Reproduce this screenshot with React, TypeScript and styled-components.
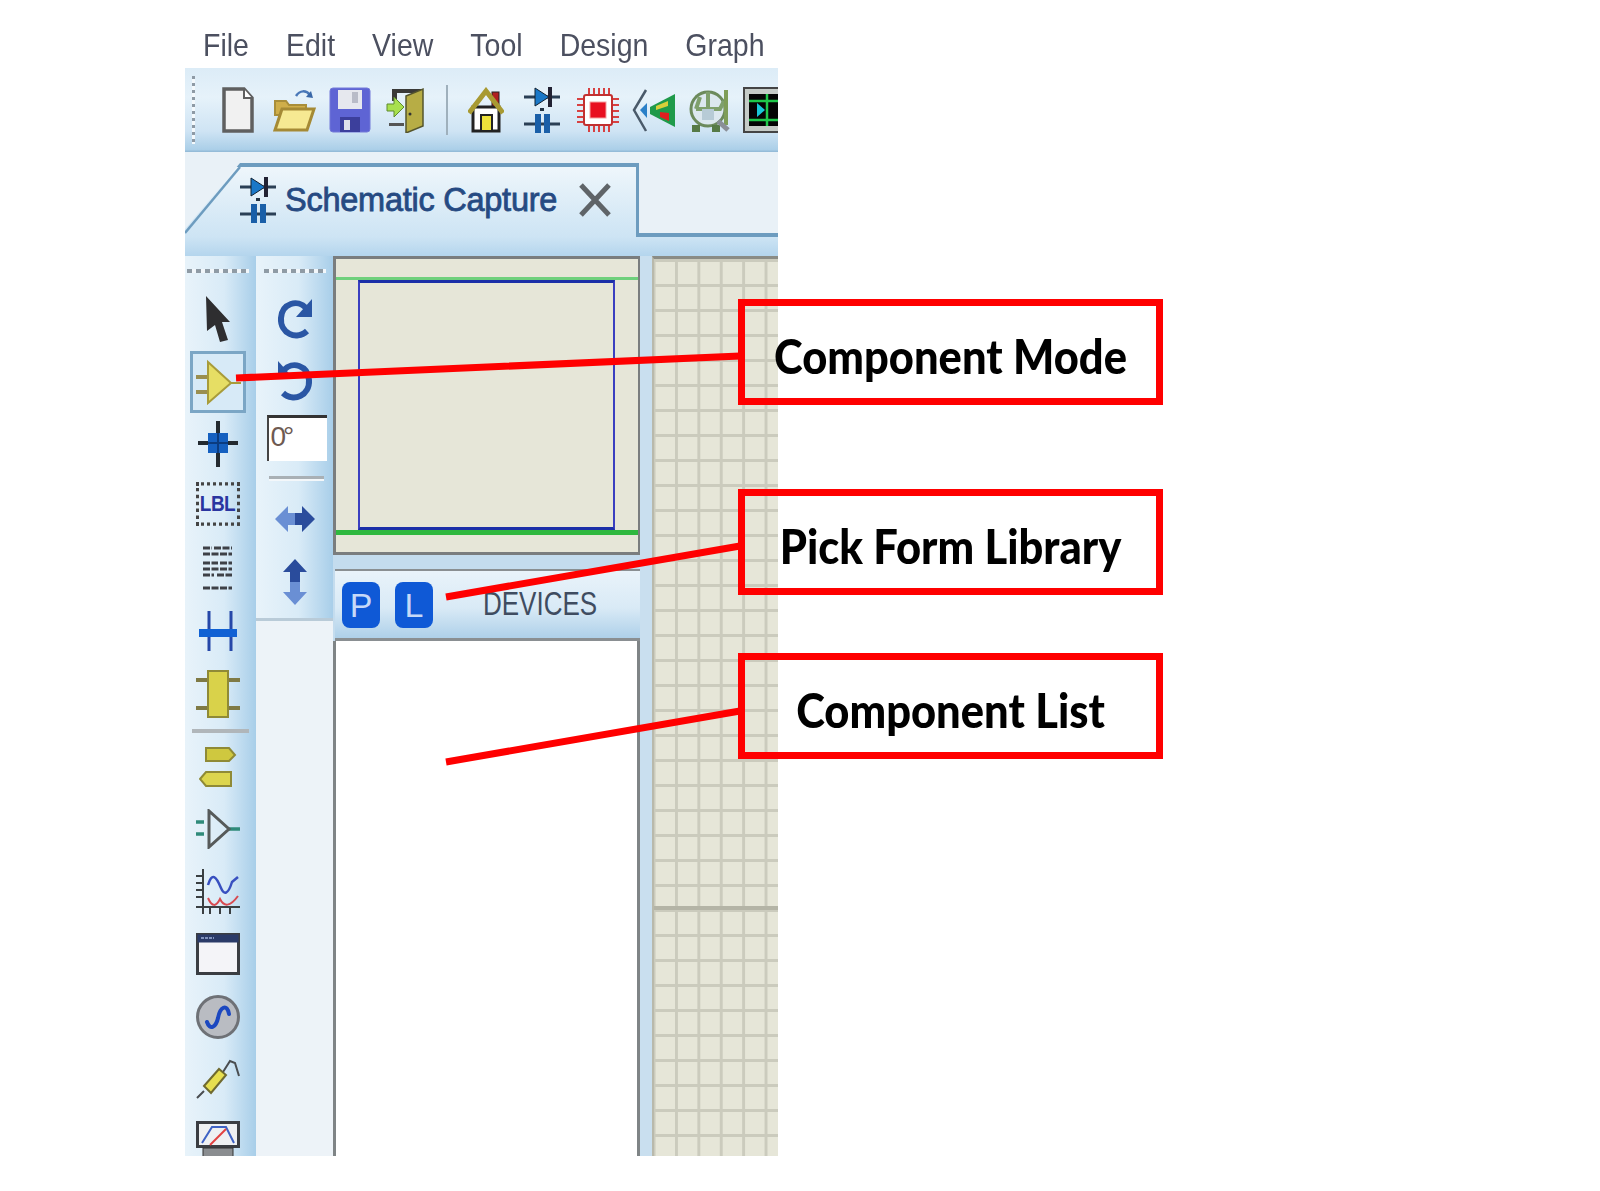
import React from "react";
import styled, { createGlobalStyle } from "styled-components";

const GlobalStyle = createGlobalStyle`
  html, body { margin: 0; padding: 0; background: #fff; overflow: hidden; }
  body { font-family: "Liberation Sans", Arial, sans-serif; }
`;

const Stage = styled.div`
  position: relative;
  width: 1600px;
  height: 1191px;
  padding-left: 185px;
  box-sizing: border-box;
`;

const Window = styled.div`
  width: 593px;
  height: 1156px;
  display: flex;
  flex-direction: column;
  overflow: hidden;
  filter: blur(0.7px);
`;

const MenuBar = styled.div`
  height: 68px;
  flex-shrink: 0;
  display: flex;
  align-items: center;
  gap: 37px;
  padding: 0 0 0 18px;
  background: #fff;
  box-sizing: border-box;
`;

const MenuItem = styled.span`
  font-size: 28.5px;
  line-height: 34px;
  margin-top: 22px;
  color: #4c5060;
  transform: scaleY(1.12);
`;

const Toolbar = styled.div`
  position: relative;
  height: 84px;
  flex-shrink: 0;
  display: flex;
  align-items: center;
  gap: 10px;
  padding-left: 30px;
  overflow: hidden;
  box-sizing: border-box;
  background: linear-gradient(#dcecf7 0%, #e6f2fa 35%, #cfe4f4 75%, #abcfe8 97%, #8fb7d4 100%);
`;

const ToolbarGrip = styled.div`
  position: absolute;
  left: 7px;
  top: 8px;
  width: 3px;
  height: 68px;
  background: repeating-linear-gradient(#8e9aa5 0 3px, #f4f9fc 3px 7px);
`;

const ToolbarIcon = styled.div`
  width: 46px;
  height: 48px;
  flex-shrink: 0;
  display: flex;
  align-items: center;
  justify-content: center;
`;

const ToolbarSep = styled.div`
  width: 2px;
  height: 50px;
  flex-shrink: 0;
  margin: 0 5px 0 7px;
  background: #9fb0bc;
`;

const TabBar = styled.div`
  flex-shrink: 0;
  background: #e9f1f7;
`;

const TabRow = styled.div`
  height: 85px;
  padding-top: 11px;
  box-sizing: border-box;
  display: flex;
`;

const Tab = styled.div`
  position: relative;
  width: 454px;
  flex-shrink: 0;
  box-sizing: border-box;
  padding: 0 0 4px 55px;
  display: flex;
  align-items: center;
  border-top: 4px solid #6d9cbf;
  border-right: 3px solid #6d9cbf;
  background: linear-gradient(#eef6fb, #cde4f4);
  clip-path: polygon(55px 0, 100% 0, 100% 100%, 0 100%, 0 66px);
`;

const TabSlant = styled.svg`
  position: absolute;
  left: 0;
  top: -4px;
`;

const TabTitle = styled.span`
  margin-left: 9px;
  font-size: 32.5px;
  letter-spacing: -0.25px;
  color: #264a82;
  -webkit-text-stroke: 0.8px #264a82;
  white-space: nowrap;
`;

const TabClose = styled.svg`
  margin-left: 21px;
  flex-shrink: 0;
`;

const TabRest = styled.div`
  flex: 1;
  border-bottom: 4px solid #6d9cbf;
`;

const TabFoot = styled.div`
  height: 19px;
  background: linear-gradient(#cde4f4, #b4d5ed);
`;

const Main = styled.div`
  flex: 1;
  min-height: 0;
  display: flex;
  background: #c4dcee;
`;

const sideGradient = "linear-gradient(90deg, #e8f3fa 0%, #d9ebf7 55%, #a8cee9 100%)";

const ModeColumn = styled.div`
  width: 71px;
  flex-shrink: 0;
  box-sizing: border-box;
  padding-right: 6px;
  display: flex;
  flex-direction: column;
  align-items: center;
  overflow: hidden;
  background: ${sideGradient};
`;

const OrientColumn = styled.div`
  width: 77px;
  flex-shrink: 0;
  background: #edf3f8;
`;

const OrientTools = styled.div`
  height: 365px;
  display: flex;
  flex-direction: column;
  align-items: center;
  background: ${sideGradient};
  border-bottom: 3px solid #b9cbd8;
  box-sizing: border-box;
`;

const Grip = styled.div`
  width: 62px;
  height: 4px;
  flex-shrink: 0;
  margin: 13px 0 15px;
  background: repeating-linear-gradient(90deg, #8f9ba5 0 5px, #f2f7fb 5px 9px);
`;

const ModeButton = styled.div<{ $active?: boolean }>`
  width: 56px;
  height: 62.5px;
  flex-shrink: 0;
  box-sizing: border-box;
  display: flex;
  align-items: center;
  justify-content: center;
  border: 3px solid ${(p) => (p.$active ? "#7ba6c5" : "transparent")};
  background: ${(p) => (p.$active ? "#d7eaf7" : "transparent")};
`;

const ModeSep = styled.div`
  width: 57px;
  height: 4px;
  flex-shrink: 0;
  margin: 3px 0 3px 6px;
  background: #b0b6ba;
`;

const LabelChip = styled.div`
  width: 44px;
  height: 38px;
  margin-top: -6px;
  box-sizing: border-box;
  border: 3px dotted #444;
  display: flex;
  align-items: center;
  justify-content: center;
  font-size: 19px;
  font-weight: 700;
  letter-spacing: -0.5px;
  color: #2a35a0;
  transform: scaleY(1.15);
`;

const OrientButton = styled.div<{ $height: number }>`
  width: 100%;
  height: ${(p) => p.$height}px;
  flex-shrink: 0;
  display: flex;
  align-items: center;
  justify-content: center;
`;

const AngleBox = styled.div`
  width: 60px;
  height: 46px;
  margin: 3px 0 0 4px;
  flex-shrink: 0;
  box-sizing: border-box;
  padding: 2px 0 0 2px;
  background: #fff;
  border-top: 3px solid #333;
  border-left: 2px solid #444;
  font-size: 28px;
  line-height: 34px;
  letter-spacing: -3px;
  color: #6e5a52;
`;

const OrientSep = styled.div`
  width: 55px;
  height: 3px;
  margin: 15px 0 9px 4px;
  flex-shrink: 0;
  background: #a9b0b5;
  box-shadow: 0 2px 0 #f3f7fa;
`;

const Middle = styled.div`
  width: 307px;
  flex-shrink: 0;
  display: flex;
  flex-direction: column;
`;

const Preview = styled.div`
  height: 299px;
  flex-shrink: 0;
  box-sizing: border-box;
  padding-top: 18px;
  background: #e6e6d8;
  border: 3px solid #7a7d7e;
  border-right-width: 2px;
`;

const PreviewSheet = styled.div`
  height: 258px;
  box-sizing: border-box;
  display: flex;
  padding: 0 23px 0 22px;
  border-top: 3px solid #6fd07c;
  border-bottom: 5px solid #2fb83f;
`;

const PreviewRect = styled.div`
  flex: 1;
  border: 2px solid #3a3fc0;
  border-top: 3px solid #1b2fa8;
  border-bottom: 3px solid #1b2fa8;
`;

const DevicesHeader = styled.div`
  height: 72px;
  flex-shrink: 0;
  margin: 14px 0 0 2px;
  box-sizing: border-box;
  display: flex;
  align-items: center;
  padding-left: 7px;
  gap: 15px;
  border-top: 2px solid #8a8f92;
  border-bottom: 3px solid #8a8f92;
  background: linear-gradient(#e9f3fa, #d9eaf6 55%, #aed0e9);
`;

const PickButton = styled.div`
  width: 38px;
  height: 46px;
  box-sizing: border-box;
  display: flex;
  align-items: center;
  justify-content: center;
  border-radius: 8px;
  background: #0f59d6;
  color: #c6d9f8;
  font-size: 34px;
  line-height: 1;
`;

const DevicesLabel = styled.span`
  margin-left: 35px;
  font-size: 26px;
  color: #3f4c60;
  transform: scaleY(1.25);
`;

const DeviceList = styled.div`
  flex: 1;
  background: #fff;
  margin-left: 0;
  border-left: 3px solid #7f8486;
  border-right: 3px solid #7f8486;
`;

const Gutter = styled.div`
  width: 12px;
  flex-shrink: 0;
  background: #c9dfef;
`;

const Canvas = styled.div`
  flex: 1;
  min-width: 0;
  border-top: 3px solid #8a8c86;
  border-left: 2px solid #b9b9ab;
  background-color: #e6e6d8;
  background-image: linear-gradient(#b4b4a6, #b4b4a6), linear-gradient(#cbcbbd 0 3px, transparent 3px),
    linear-gradient(90deg, #cbcbbd 0 3px, transparent 3px);
  background-size: 100% 4px, 100% 25px, 22.4px 100%;
  background-position: 0 647px, 0 0, 21px 0;
  background-repeat: no-repeat, repeat, repeat;
`;

const Leaders = styled.svg`
  position: absolute;
  left: 0;
  top: 0;
  pointer-events: none;
`;

const Callout = styled.div<{ $top: number }>`
  position: absolute;
  left: 738px;
  top: ${(p) => p.$top}px;
  width: 425px;
  height: 106px;
  box-sizing: border-box;
  border: 7px solid #f00;
  padding-top: 6px;
  display: flex;
  align-items: center;
  justify-content: center;
  font-family: Lato, "Open Sans", sans-serif;
  font-weight: 900;
  font-size: 43.5px;
  color: #000;
  white-space: nowrap;
`;

const CalloutText = styled.span`
  display: block;
  transform: scaleY(1.1);
`;

const Ico = ({ w, h, children }: { w: number; h: number; children: React.ReactNode }) => (
  <svg width={w} height={h} viewBox={`0 0 ${w} ${h}`}>
    {children}
  </svg>
);

const NewIcon = () => (
  <Ico w={34} h={46}>
    <path d="M3 2H23L31 11V44H3Z" fill="#f1f1f1" stroke="#5f5f5f" strokeWidth="3.5" />
    <path d="M23 2V11H31" fill="#fff" stroke="#5f5f5f" strokeWidth="2" />
  </Ico>
);

const OpenIcon = () => (
  <Ico w={44} h={46}>
    <path d="M3 14H14L17 18H34V28H3Z" fill="#cfae4a" stroke="#a98e3a" strokeWidth="2" />
    <path d="M3 43L10 22H42L35 43Z" fill="#f6e992" stroke="#a58a35" strokeWidth="3" />
    <path d="M24 9C28 3 34 3 38 8" fill="none" stroke="#4a78b8" strokeWidth="2.5" />
    <path d="M34 10L41 11L39 4Z" fill="#3a68a8" />
  </Ico>
);

const SaveIcon = () => (
  <Ico w={42} h={46}>
    <rect x="1" y="1" width="40" height="44" rx="3" fill="#5e64d4" stroke="#7379d8" />
    <rect x="9" y="3" width="24" height="19" fill="#e6e8ee" />
    <rect x="23" y="5" width="6" height="11" fill="#b9bcc8" />
    <rect x="11" y="30" width="20" height="15" fill="#3c3f9c" />
    <rect x="15" y="33" width="6" height="10" fill="#dfe0ea" />
  </Ico>
);

const ExitIcon = () => (
  <Ico w={42} h={46}>
    <path d="M7 2H38V38H34V6H12V14H7Z" fill="#3a3a38" />
    <path d="M21 9L38 2V39L21 46Z" fill="#b7ad45" stroke="#55552c" strokeWidth="1.5" />
    <path d="M2 17H9V10L19 20L9 30V24H2Z" fill="#a8e04e" stroke="#5f8a2e" />
    <rect x="4" y="36" width="15" height="3" fill="#555" />
    <circle cx="25" cy="27" r="1.5" fill="#333" />
  </Ico>
);

const HomeIcon = () => (
  <Ico w={36} h={46}>
    <rect x="24" y="5" width="7" height="18" fill="#b02020" stroke="#222" />
    <rect x="5" y="20" width="26" height="24" fill="#fff" stroke="#222" strokeWidth="3" />
    <path d="M1 26L18 4L35 26" fill="none" stroke="#a89a32" strokeWidth="5" />
    <rect x="13" y="28" width="11" height="16" fill="#ede23a" stroke="#222" strokeWidth="2" />
  </Ico>
);

const SchematicIcon = () => (
  <Ico w={36} h={48}>
    <path d="M0 11H36M0 38H36" stroke="#2a3f55" strokeWidth="3" />
    <path d="M11 2L25 11L11 20Z" fill="#1a78c8" stroke="#123" />
    <rect x="24" y="1" width="4" height="20" fill="#223" />
    <rect x="11" y="28" width="6" height="19" fill="#1a5fa8" />
    <rect x="20" y="28" width="6" height="19" fill="#1a5fa8" />
    <rect x="16" y="22" width="4" height="3" fill="#234" />
  </Ico>
);

const ChipIcon = () => (
  <Ico w={44} h={46}>
    <path d="M13 1V45M18 1V45M23 1V45M28 1V45M33 1V45M1 12H43M1 18H43M1 24H43M1 30H43M1 35H43" stroke="#d84040" strokeWidth="2" />
    <rect x="8" y="8" width="28" height="30" rx="2" fill="#fff" stroke="#c23030" strokeWidth="2" />
    <rect x="14" y="15" width="16" height="16" fill="#e80f20" stroke="#f3a0a0" />
  </Ico>
);

const ThreeDIcon = () => (
  <Ico w={44} h={46}>
    <path d="M14 3L2 23L14 44" fill="none" stroke="#4a5a6a" strokeWidth="2.5" />
    <path d="M8 23L15 16V31Z" fill="#2a80c8" />
    <path d="M18 20L43 7V40L18 27Z" fill="#1f9a4a" />
    <path d="M24 19L36 14V19L24 23Z" fill="#d8cf3a" />
    <path d="M28 25L37 26V34L28 30Z" fill="#e02020" />
  </Ico>
);

const GearIcon = () => (
  <Ico w={44} h={46}>
    <circle cx="20" cy="22" r="17" fill="#dce8ef" stroke="#6c8a5c" strokeWidth="3" />
    <path d="M20 5V22M8 22H32L36 14M8 22L12 10" fill="none" stroke="#7fa06c" strokeWidth="4" />
    <rect x="14" y="22" width="12" height="11" fill="#b7cbd6" />
    <path d="M38 3V38" stroke="#7e9d58" strokeWidth="4" />
    <rect x="4" y="38" width="8" height="7" fill="#567a46" />
    <rect x="24" y="38" width="8" height="7" fill="#567a46" />
    <path d="M30 34L40 43" stroke="#8a8f98" strokeWidth="5" />
  </Ico>
);

const GraphIcon = () => (
  <Ico w={46} h={46}>
    <rect x="1" y="1" width="44" height="44" fill="#c5cbc7" stroke="#444" strokeWidth="2" />
    <rect x="6" y="7" width="36" height="32" fill="#050505" />
    <path d="M6 14H42M6 33H42M24 7V39" stroke="#1fc84a" strokeWidth="2.5" />
    <path d="M14 16V30L22 23Z" fill="#18c8d8" />
  </Ico>
);

const CursorIcon = () => (
  <Ico w={32} h={48}>
    <path d="M4 1L28 27H20L26 45L18 47L13 30L5 36Z" fill="#2e2e30" />
  </Ico>
);

const ComponentIcon = () => (
  <Ico w={46} h={46}>
    <path d="M1 18H14M1 33H14" stroke="#9a8f50" strokeWidth="4" />
    <path d="M13 3L36 24L13 44Z" fill="#e6de64" stroke="#a89c3a" strokeWidth="2" />
    <path d="M36 24H46" stroke="#a89c3a" strokeWidth="2" />
  </Ico>
);

const JunctionIcon = () => (
  <Ico w={42} h={46}>
    <path d="M21 0V46M1 22H41" stroke="#232a30" strokeWidth="4" />
    <rect x="11" y="12" width="20" height="20" fill="#1560c0" />
    <path d="M21 12V32M11 22H31" stroke="#0b3c80" strokeWidth="2" />
  </Ico>
);

const ScriptIcon = () => (
  <Ico w={32} h={48}>
    <path d="M1 3H10M12 3H30M1 9H30M1 18H16M18 18H30M1 24H30M1 30H12M15 30H30M1 43H30" stroke="#3e4147" strokeWidth="3" strokeDasharray="7 1.5" />
  </Ico>
);

const BusIcon = () => (
  <Ico w={38} h={42}>
    <path d="M10 0V40M32 0V40" stroke="#2547a8" strokeWidth="3" />
    <rect x="0" y="18" width="38" height="8" fill="#1061d4" />
  </Ico>
);

const SubcircuitIcon = () => (
  <Ico w={44} h={48}>
    <path d="M0 10H44M0 38H44" stroke="#7f7a45" strokeWidth="4" />
    <rect x="12" y="1" width="20" height="46" fill="#d9d24a" stroke="#8f8a36" strokeWidth="2" />
  </Ico>
);

const TerminalIcon = () => (
  <Ico w={38} h={40}>
    <path d="M7 1H30L36 8L30 14H7Z" fill="#cfc83f" stroke="#8f8a36" strokeWidth="2" />
    <path d="M1 32L7 25H32V39H7Z" fill="#dcd54e" stroke="#8f8a36" strokeWidth="2" />
  </Ico>
);

const PinIcon = () => (
  <Ico w={44} h={40}>
    <path d="M0 13H8M0 25H8M33 20H44" stroke="#2f8a7a" strokeWidth="3.5" />
    <path d="M13 2V38L33 20Z" fill="none" stroke="#565a5a" strokeWidth="3" />
  </Ico>
);

const WaveIcon = () => (
  <Ico w={44} h={48}>
    <path d="M7 1V46M0 39H44" stroke="#3a3f42" strokeWidth="2" />
    <path d="M0 8H7M0 15H7M0 22H7M0 29H7M14 39V46M24 39V46M34 39V46" stroke="#3a3f42" strokeWidth="2" />
    <path d="M12 17C16 4 20 8 25 20C28 27 32 27 36 14L42 9" fill="none" stroke="#3850c0" strokeWidth="2.5" />
    <path d="M12 30C16 39 20 39 24 31C28 39 34 39 42 28" fill="none" stroke="#d84a50" strokeWidth="2" />
  </Ico>
);

const RecorderIcon = () => (
  <Ico w={44} h={42}>
    <rect x="1.5" y="1.5" width="41" height="39" fill="#f4f4f8" stroke="#3a3d42" strokeWidth="3" />
    <rect x="1.5" y="1.5" width="41" height="8" fill="#2a3a68" />
    <path d="M5 5H18" stroke="#9fb0d8" strokeWidth="1.5" strokeDasharray="3 1" />
  </Ico>
);

const GeneratorIcon = () => (
  <Ico w={44} h={46}>
    <circle cx="22" cy="23" r="20.5" fill="#b9bcc2" stroke="#6e7176" strokeWidth="3" />
    <path d="M11 28C14 37 20 33 22 24C24 13 31 9 33 20" fill="none" stroke="#1c48c0" strokeWidth="4" strokeLinecap="round" />
  </Ico>
);

const ProbeIcon = () => (
  <Ico w={44} h={42}>
    <path d="M1 40L8 33M27 14L34 3L39 5L43 18" fill="none" stroke="#4a4d50" strokeWidth="2" />
    <path d="M8 28L23 11L30 17L15 35Z" fill="#e7df50" stroke="#6f6a30" strokeWidth="2" />
  </Ico>
);

const InstrumentIcon = () => (
  <Ico w={44} h={42}>
    <rect x="1.5" y="1.5" width="41" height="24" fill="#eef0f2" stroke="#3a3d42" strokeWidth="3" />
    <path d="M6 22L16 6H30L38 22" fill="none" stroke="#3e62c4" strokeWidth="2" />
    <path d="M14 24L30 8" stroke="#e24040" strokeWidth="2" />
    <rect x="7" y="27" width="30" height="14" fill="#8a8d90" stroke="#333" />
  </Ico>
);

const RedoIcon = () => (
  <Ico w={38} h={44}>
    <path d="M30 11C22 2 6 6 5 21C4 36 20 44 31 34" fill="none" stroke="#2a56a4" strokeWidth="6" />
    <path d="M36 2V20H20Z" fill="#2a56a4" />
  </Ico>
);

const UndoIcon = () => (
  <Ico w={38} h={44}>
    <path d="M8 11C16 2 32 6 33 21C34 36 18 44 7 34" fill="none" stroke="#2a56a4" strokeWidth="6" />
    <path d="M2 2V20H18Z" fill="#2a56a4" />
  </Ico>
);

const FlipHIcon = () => (
  <Ico w={42} h={28}>
    <path d="M1 14L14 1V8H21V20H14V27Z" fill="#6a8fd4" />
    <path d="M41 14L28 1V8H21V20H28V27Z" fill="#2a4c9c" />
  </Ico>
);

const FlipVIcon = () => (
  <Ico w={26} h={48}>
    <path d="M13 1L25 14H18V24H8V14H1Z" fill="#2a4c9c" />
    <path d="M13 47L25 34H18V24H8V34H1Z" fill="#6a8fd4" />
  </Ico>
);

const menu = ["File", "Edit", "View", "Tool", "Design", "Graph"];

const modes: { key: string; icon: React.ReactNode; active?: boolean }[] = [
  { key: "select", icon: <CursorIcon /> },
  { key: "component", icon: <ComponentIcon />, active: true },
  { key: "junction", icon: <JunctionIcon /> },
  { key: "label", icon: <LabelChip>LBL</LabelChip> },
  { key: "script", icon: <ScriptIcon /> },
  { key: "bus", icon: <BusIcon /> },
  { key: "subcircuit", icon: <SubcircuitIcon /> },
];

const gadgets: { key: string; icon: React.ReactNode }[] = [
  { key: "terminal", icon: <TerminalIcon /> },
  { key: "pin", icon: <PinIcon /> },
  { key: "graph", icon: <WaveIcon /> },
  { key: "recorder", icon: <RecorderIcon /> },
  { key: "generator", icon: <GeneratorIcon /> },
  { key: "probe", icon: <ProbeIcon /> },
  { key: "instrument", icon: <InstrumentIcon /> },
];

export default function App() {
  return (
    <Stage>
      <GlobalStyle />
      <Window>
        <MenuBar>
          {menu.map((m) => (
            <MenuItem key={m}>{m}</MenuItem>
          ))}
        </MenuBar>

        <Toolbar>
          <ToolbarGrip />
          <ToolbarIcon><NewIcon /></ToolbarIcon>
          <ToolbarIcon><OpenIcon /></ToolbarIcon>
          <ToolbarIcon><SaveIcon /></ToolbarIcon>
          <ToolbarIcon><ExitIcon /></ToolbarIcon>
          <ToolbarSep />
          <ToolbarIcon><HomeIcon /></ToolbarIcon>
          <ToolbarIcon><SchematicIcon /></ToolbarIcon>
          <ToolbarIcon><ChipIcon /></ToolbarIcon>
          <ToolbarIcon><ThreeDIcon /></ToolbarIcon>
          <ToolbarIcon><GearIcon /></ToolbarIcon>
          <ToolbarIcon><GraphIcon /></ToolbarIcon>
        </Toolbar>

        <TabBar>
          <TabRow>
            <Tab>
              <TabSlant width="60" height="74" viewBox="0 0 60 74">
                <path d="M0 70L55 4" stroke="#6d9cbf" strokeWidth="2.5" fill="none" />
              </TabSlant>
              <SchematicIcon />
              <TabTitle>Schematic Capture</TabTitle>
              <TabClose width="34" height="36" viewBox="0 0 34 36">
                <path d="M3 3L31 33M31 3L3 33" stroke="#5f6468" strokeWidth="5" />
              </TabClose>
            </Tab>
            <TabRest />
          </TabRow>
          <TabFoot />
        </TabBar>

        <Main>
          <ModeColumn>
            <Grip />
            {modes.map((m) => (
              <ModeButton key={m.key} $active={m.active}>{m.icon}</ModeButton>
            ))}
            <ModeSep />
            {gadgets.map((g) => (
              <ModeButton key={g.key}>{g.icon}</ModeButton>
            ))}
          </ModeColumn>

          <OrientColumn>
            <OrientTools>
              <Grip />
              <OrientButton $height={62}><RedoIcon /></OrientButton>
              <OrientButton $height={62}><UndoIcon /></OrientButton>
              <AngleBox>0°</AngleBox>
              <OrientSep />
              <OrientButton $height={62}><FlipHIcon /></OrientButton>
              <OrientButton $height={64}><FlipVIcon /></OrientButton>
            </OrientTools>
          </OrientColumn>

          <Middle>
            <Preview>
              <PreviewSheet>
                <PreviewRect />
              </PreviewSheet>
            </Preview>
            <DevicesHeader>
              <PickButton>P</PickButton>
              <PickButton>L</PickButton>
              <DevicesLabel>DEVICES</DevicesLabel>
            </DevicesHeader>
            <DeviceList />
          </Middle>

          <Gutter />
          <Canvas />
        </Main>
      </Window>

      <Leaders width="1600" height="1191" viewBox="0 0 1600 1191">
        <path d="M236 378L740 356M446 597L740 546M446 762L740 711" stroke="#f00" strokeWidth="7" fill="none" />
      </Leaders>
      <Callout $top={299}><CalloutText>Component Mode</CalloutText></Callout>
      <Callout $top={489}><CalloutText>Pick Form Library</CalloutText></Callout>
      <Callout $top={653}><CalloutText>Component List</CalloutText></Callout>
    </Stage>
  );
}
